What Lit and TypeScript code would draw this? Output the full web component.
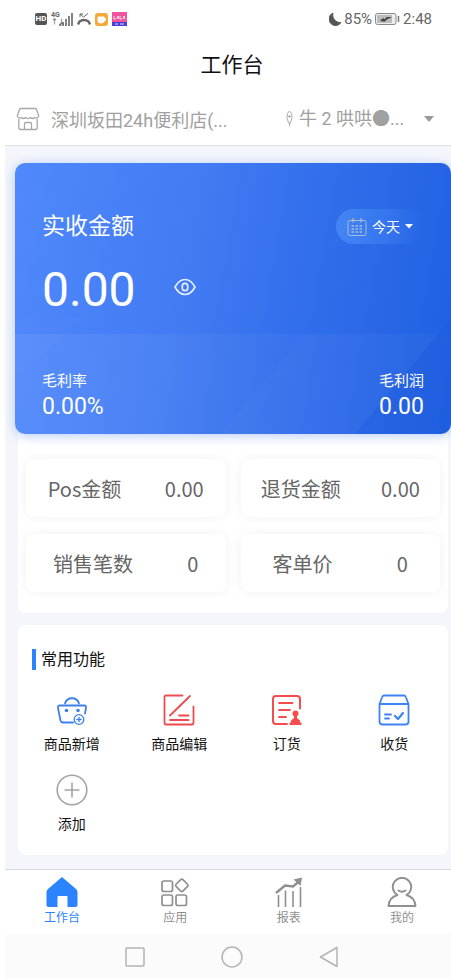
import { LitElement, html, css, svg } from "lit";
import { customElement, state } from "lit/decorators.js";
import { classMap } from "lit/directives/class-map.js";

const homeIcon = svg`<path d="M16 0 30 12Q31.500 13.500 31.500 15V28Q31.500 30 29.500 30H21.500V20Q21.500 19 20.500 19H12.500Q11.500 19 11.500 20V30H2.500Q.5 30 .5 28V15Q.5 13.500 2 12Z" fill="#2b84fb"/>`;
const appsIcon = svg`<g fill="none" stroke="#8f8f8f" stroke-width="1.700"><rect x="3" y="4" width="10.500" height="10.500" rx="2"/><rect x="3" y="18" width="10.500" height="10.500" rx="2"/><rect x="17" y="18" width="10.500" height="10.500" rx="2"/><rect x="18" y="3.500" width="9.600" height="9.600" rx="1.500" transform="rotate(45 22.800 8.300)"/></g>`;
const reportIcon = svg`<g fill="none" stroke="#8f8f8f" stroke-width="1.600"><path d="M5.500 18V30M12.500 13.500V30M20 14V30M27.500 10V30"/><path d="m3 16 9-7.500 8 1 6-5" stroke-width="2.400"/></g><path d="m20.500 2.500 8.500-2-1.500 8.500z" fill="#8f8f8f"/>`;
const mineIcon = svg`<g fill="none" stroke="#8f8f8f" stroke-width="1.900" stroke-linejoin="round" stroke-linecap="round"><path d="M11.500 18A9.200 9.200 0 1 1 20.500 18C26 19.500 29 23 29.500 29H2.500C3 23 6 19.500 11.500 18Z"/><path d="M12.500 13.500Q16 16 19.500 13.500"/></g>`;

const tabs = [
  { name: "工作台", icon: homeIcon },
  { name: "应用", icon: appsIcon },
  { name: "报表", icon: reportIcon },
  { name: "我的", icon: mineIcon },
];

const stats = [
  { label: "Pos金额", value: "0.00" },
  { label: "退货金额", value: "0.00" },
  { label: "销售笔数", value: "0" },
  { label: "客单价", value: "0" },
];

const actions = [
  {
    name: "商品新增",
    icon: svg`<g fill="none" stroke="#3c80ee" stroke-width="1.800" stroke-linecap="round" stroke-linejoin="round"><path d="M9 9.500A7.300 7.300 0 0 1 23 9.500"/><path d="M17 28.500H7Q5 28.500 4.500 26.500L2 14Q1.500 11.500 4 11.500H28Q30.500 11.500 30 14L29 19.500"/><circle cx="23" cy="25.500" r="4.800" stroke-width="1.300"/><path d="M23 23.300V27.700M20.800 25.500H25.200" stroke-width="1.300"/></g><circle cx="10.500" cy="16.500" r="1.800" fill="#3c80ee"/><circle cx="22" cy="16.500" r="1.800" fill="#3c80ee"/>`,
  },
  {
    name: "商品编辑",
    icon: svg`<g fill="none" stroke="#ee4b50" stroke-width="1.800" stroke-linecap="round" stroke-linejoin="round"><path d="M19.500 1.500H3Q1.500 1.500 1.500 3V28.500Q1.500 30.500 3 30.500H29Q30.500 30.500 30.500 28.500V12.500"/><path d="M27 2 7 21.500M16 21.500H25.500M7 26H25.500"/></g>`,
  },
  {
    name: "订货",
    icon: svg`<g fill="none" stroke="#f64c4f" stroke-width="2" stroke-linecap="round" stroke-linejoin="round"><path d="M29 14.500V5Q29 2 26 2H5Q2 2 2 5V27Q2 30 5 30H16"/><path d="M8 9H21.500M8 16H19M8 23H15" stroke-width="1.800"/></g><circle cx="24.500" cy="19.500" r="3" fill="#f64c4f"/><path d="M23 21h3v3l3 2.500V28.500h1.500V31H18.500V28.500H20V26.500L23 24z" fill="#f64c4f"/>`,
  },
  {
    name: "收货",
    icon: svg`<g fill="none" stroke="#3d83f5" stroke-width="1.800" stroke-linecap="round" stroke-linejoin="round"><path d="M1.500 10 4 3.500Q4.600 1.500 6 1.500H26Q27.400 1.500 28 3.500L30.500 10V27.500Q30.500 30.500 27.500 30.500H4.500Q1.500 30.500 1.500 27.500ZM1.500 10H30.500"/><path d="M7 20.500H13M7 24.500H11"/><path d="M17 22 20 25 25 19" stroke-width="2.200"/></g>`,
  },
  {
    name: "添加",
    icon: svg`<g fill="none" stroke="#a3a3a3" stroke-width="1.600"><circle cx="16" cy="16" r="14.800"/><path d="M16 8.500V23.500M8.500 16H23.500"/></g>`,
  },
];

@customElement("app-root")
export class AppRoot extends LitElement {
  @state() private tab = 0;

  static styles = css`
    :host {
      display: flex;
      flex-direction: column;
      box-sizing: border-box;
      min-height: 100vh;
      padding-left: 5px;
      background: #fff;
      color: #111;
      font-family: Roboto, "Noto Sans CJK SC", sans-serif;
    }
    button, select {
      margin: 0;
      padding: 0;
      border: 0;
      background: none;
      color: inherit;
      font: inherit;
      cursor: pointer;
      appearance: none;
    }
    svg { display: block; flex: none; }
    h1, h2, p, dl, dt, dd { margin: 0; font-weight: 400; }
    .status {
      display: flex;
      align-items: center;
      justify-content: space-between;
      height: 38px;
      padding: 0 19px 0 30px;
      color: #666;
      font-size: 15px;
    }
    .group { display: flex; align-items: center; gap: 4px; }
    .clock { gap: 3px; }
    .hd {
      width: 12px;
      border-radius: 2px;
      background: #555;
      color: #fff;
      font-size: 8px;
      font-weight: 700;
      line-height: 12px;
      text-align: center;
    }
    .network { display: flex; }
    .net {
      width: 8px;
      font-size: 7px;
      font-weight: 700;
      line-height: 7px;
    }
    .title {
      padding-left: 8px;
      font-size: 21px;
      line-height: 54px;
      text-align: center;
    }
    .picker {
      display: flex;
      align-items: center;
      justify-content: space-between;
      height: 53px;
      padding: 0 17px 0 11px;
      border-bottom: 1px solid #dfe0e4;
      color: #a0a0a0;
      font-size: 18px;
    }
    .store { display: flex; align-items: center; gap: 11px; }
    .staff { display: flex; align-items: center; gap: 6px; }
    .staff select { width: 119px; }
    .main {
      flex: 1;
      padding: 17px 0 14px 10px;
      background: #f4f6fb;
    }
    .glow {
      position: relative;
      border-radius: 10px;
      box-shadow: 0 2px 12px #4f82f466;
    }
    .revenue {
      position: relative;
      padding: 46px 27px 12px;
      border-radius: 10px;
      overflow: hidden;
      background:
        linear-gradient(to right, #ffffff10, #ffffff02) bottom / 100% 100px no-repeat,
        linear-gradient(100deg, #5089fd 0%, #427bf2 40%, #306deb 68%, #1f5fe0 100%);
      color: #fff;
    }
    .facets { position: absolute; inset: 0; width: 100%; height: 100%; }
    .row {
      position: relative;
      display: flex;
      align-items: center;
      justify-content: space-between;
    }
    .caption { font-size: 23px; line-height: 35px; }
    .period {
      display: flex;
      align-items: center;
      gap: 5px;
      height: 35px;
      padding: 0 11px;
      border-radius: 18px;
      background: linear-gradient(to right, #4385f5, #2f70ea00);
      font-size: 14px;
    }
    .amount {
      position: relative;
      display: flex;
      align-items: center;
      gap: 38px;
      margin-top: 18px;
      font-size: 48px;
      line-height: 56px;
    }
    .amount button { margin-bottom: 6px; }
    .margins {
      position: relative;
      display: flex;
      justify-content: space-between;
      margin-top: 53px;
    }
    .margins dt { font-size: 15px; line-height: 20px; }
    .margins dd { font-size: 23px; line-height: 31px; }
    .panel {
      margin: 0 3px;
      background: #fff;
      border-radius: 0 0 8px 8px;
    }
    .stats {
      display: grid;
      grid-template-columns: 1fr 1fr;
      gap: 17px 15px;
      padding: 25px 8px 21px;
    }
    .stat {
      display: flex;
      align-items: center;
      justify-content: space-around;
      height: 58px;
      border-radius: 8px;
      background: #fff;
      box-shadow: 0 0 12px #0000000f;
      color: #666;
      font-family: "Noto Sans CJK SC", sans-serif;
      font-size: 20px;
    }
    .common {
      margin-top: 12px;
      padding: 24px 0 21px;
      border-radius: 8px;
    }
    .heading {
      margin-left: 14px;
      padding-left: 5px;
      border-left: 4px solid #2b84fb;
      font-size: 16px;
      line-height: 21px;
    }
    .actions {
      display: grid;
      grid-template-columns: repeat(4, 1fr);
      row-gap: 20px;
      margin-top: 24px;
    }
    .action {
      display: flex;
      flex-direction: column;
      align-items: center;
      gap: 8px;
      font-size: 14px;
      line-height: 20px;
    }
    .tabs {
      display: flex;
      justify-content: space-between;
      padding: 7px 29px 7px 37px;
      border-top: 1px solid #d8d9de;
    }
    .tab {
      display: flex;
      flex-direction: column;
      align-items: center;
      width: 40px;
      color: #8f8f8f;
      font-size: 12px;
      line-height: 18px;
    }
    .tab.active { color: #2b84fb; }
    .system {
      display: flex;
      align-items: center;
      justify-content: center;
      gap: 73px;
      height: 44px;
      padding: 2px 0 0 8px;
      box-sizing: border-box;
      background: #fbfbfb;
    }
  `;

  render() {
    return html`
      <div class="status">
        <div class="group">
          <span class="hd">HD</span>
          <span class="network">
            <span class="net">4G ↑↓</span>
            <svg width="14" height="14" viewBox="0 0 14 14" stroke="#666" stroke-width="1.600"><path d="M1 12v2M4 10v4M7 7v7M10 4v10M13 1v13"/></svg>
          </span>
          <svg width="14" height="14" viewBox="0 0 14 14" fill="none" stroke="#666"><path d="M1 12.500 2.500 9.500Q7 6.500 11.500 9.500L13 12.500" stroke-width="2.400"/><path d="M3 5V2H6M3 2 6.500 5 11 1.500"/></svg>
          <svg width="13" height="13" viewBox="0 0 13 13"><rect width="13" height="13" rx="3" fill="#f6a938"/><path d="M3 4H9V8Q9 10 6 10T3 8ZM9 5Q11 5 10.500 7 10 8 9 8" fill="#fff" stroke="#fff"/></svg>
          <svg width="15" height="14" viewBox="0 0 15 14"><path fill="#f0549c" d="M0 0h15v10H0z"/><path fill="#4a40d8" d="M0 10h15v4H0z"/><path d="M2 4v3h2M5 7l1-3 1 3M8 4v3h2M11 7l1-3 1 3M3 12h3M8 12h4" fill="none" stroke="#fff" stroke-width=".8"/></svg>
        </div>
        <div class="group clock">
          <svg width="12" height="14" viewBox="0 0 12 14"><path d="M4 1A6.500 6.500 0 1 0 12 10.500 7.500 7.500 0 0 1 4 1Z" fill="#555" stroke="#555"/></svg>
          <span>85%</span>
          <svg width="25" height="12" viewBox="0 0 25 12"><rect x=".5" y=".5" width="20.500" height="11" rx="2" fill="#eee" stroke="#888"/><path d="M2 2H17V10H2z" fill="#bbb"/><path d="M5 7 9 5V6.500L12 4H17L13 6V5.500L10 8.500H7z" fill="#444"/><path d="M23.500 3V9" stroke="#777" stroke-width="1.500"/></svg>
          <span>2:48</span>
        </div>
      </div>
      <h1 class="title">工作台</h1>
      <div class="picker">
        <button class="store">
          <svg width="24" height="24" viewBox="0 0 24 24" fill="none" stroke="#a8a8a8" stroke-width="1.300" stroke-linejoin="round"><path d="M3.500 2.500Q4 1.500 5 1.500H19Q20 1.500 20.500 2.500L22.500 8V9.500Q21 12 18.500 10.500 16.500 12.500 14.500 10.500 12 12.500 9.500 10.500 7.500 12.500 5.500 10.500 3 12 1.500 9.500V8ZM2.800 12V20.500Q2.800 22.500 4.500 22.500H19.500Q21.200 22.500 21.200 20.500V12M8.500 22.500V17Q8.500 15.500 10 15.500H14Q15.500 15.500 15.500 17V22.500"/></svg>
          <span>深圳坂田24h便利店(...</span>
        </button>
        <div class="staff">
          <svg width="7" height="17" viewBox="0 0 7 17" fill="none" stroke="#aaa"><path d="M3.500 1Q6.500 3 6 7.500L4.500 13H2.500L1 7.500Q.5 3 3.500 1ZM3.500 13V16"/><circle cx="3.500" cy="6.500" r=".8" fill="#888"/></svg>
          <select aria-label="员工"><option>牛 2 哄哄●...</option></select>
          <svg width="10" height="6" viewBox="0 0 10 6"><path d="M0 0H10L5 6Z" fill="#999"/></svg>
        </div>
      </div>
      <main class="main">
        <div class="glow"><section class="revenue">
          <svg class="facets" viewBox="0 0 436 271" preserveAspectRatio="none">
            <path d="M340 271 436 155V271Z" fill="#1857da" opacity=".2"/>
            <path d="M205 271 290 171H424L340 271Z" fill="#fff" opacity=".015"/>
            <path d="M0 215 70 155H0Z" fill="#fff" opacity=".015"/>
          </svg>
          <div class="row">
            <h2 class="caption">实收金额</h2>
            <label class="period">
              <svg width="20" height="20" viewBox="0 0 20 20" fill="none" stroke="#a9bdd8"><rect x="1" y="3.500" width="18" height="15" rx="2"/><path d="M6 1V5.500M14 1V5.500" stroke="#c8c9a8"/><path d="M4.500 9H16M4.500 12H16M4.500 15H16" stroke-dasharray="2.500 1.500" stroke-width="1.300"/></svg>
              <select aria-label="日期"><option>今天</option></select>
              <svg width="8" height="5" viewBox="0 0 8 5"><path d="M0 0H8L4 4.500Z" fill="#fff"/></svg>
            </label>
          </div>
          <div class="amount">
            <span>0.00</span>
            <button aria-label="显示金额">
              <svg width="22" height="18" viewBox="0 0 22 18" fill="none" stroke="#e4eeff" stroke-width="1.700"><path d="M1 9Q5 1.500 11 1.500T21 9Q17 16.500 11 16.500T1 9Z"/><rect x="8.300" y="5.300" width="5.400" height="7.400" rx="2.700"/></svg>
            </button>
          </div>
          <dl class="margins">
            <div><dt>毛利率</dt><dd>0.00%</dd></div>
            <div><dt>毛利润</dt><dd>0.00</dd></div>
          </dl>
        </section></div>
        <section class="panel stats">
          ${stats.map((s) => html`<dl class="stat"><dt>${s.label}</dt><dd>${s.value}</dd></dl>`)}
        </section>
        <section class="panel common">
          <h2 class="heading">常用功能</h2>
          <div class="actions">
            ${actions.map(
              (a) => html`<button class="action">
                <svg width="32" height="32" viewBox="0 0 32 32">${a.icon}</svg>
                <span>${a.name}</span>
              </button>`
            )}
          </div>
        </section>
      </main>
      <nav class="tabs">
        ${tabs.map(
          (t, i) => html`<button class=${classMap({ tab: true, active: i === this.tab })} @click=${() => (this.tab = i)}>
            <svg width="32" height="32" viewBox="0 0 32 32">${t.icon}</svg>
            <span>${t.name}</span>
          </button>`
        )}
      </nav>
      <div class="system">
        <button aria-label="最近任务"><svg width="24" height="24" viewBox="0 0 24 24" fill="none" stroke="#b4b4b4" stroke-width="1.500"><rect x="3" y="3" width="18" height="18" rx="1"/></svg></button>
        <button aria-label="主屏幕"><svg width="24" height="24" viewBox="0 0 24 24" fill="none" stroke="#b4b4b4" stroke-width="1.500"><circle cx="12" cy="12" r="10"/></svg></button>
        <button aria-label="返回"><svg width="24" height="24" viewBox="0 0 24 24" fill="none" stroke="#b4b4b4" stroke-width="1.500" stroke-linejoin="round"><path d="M20 2.500V21.500L3.500 12Z"/></svg></button>
      </div>
    `;
  }
}
